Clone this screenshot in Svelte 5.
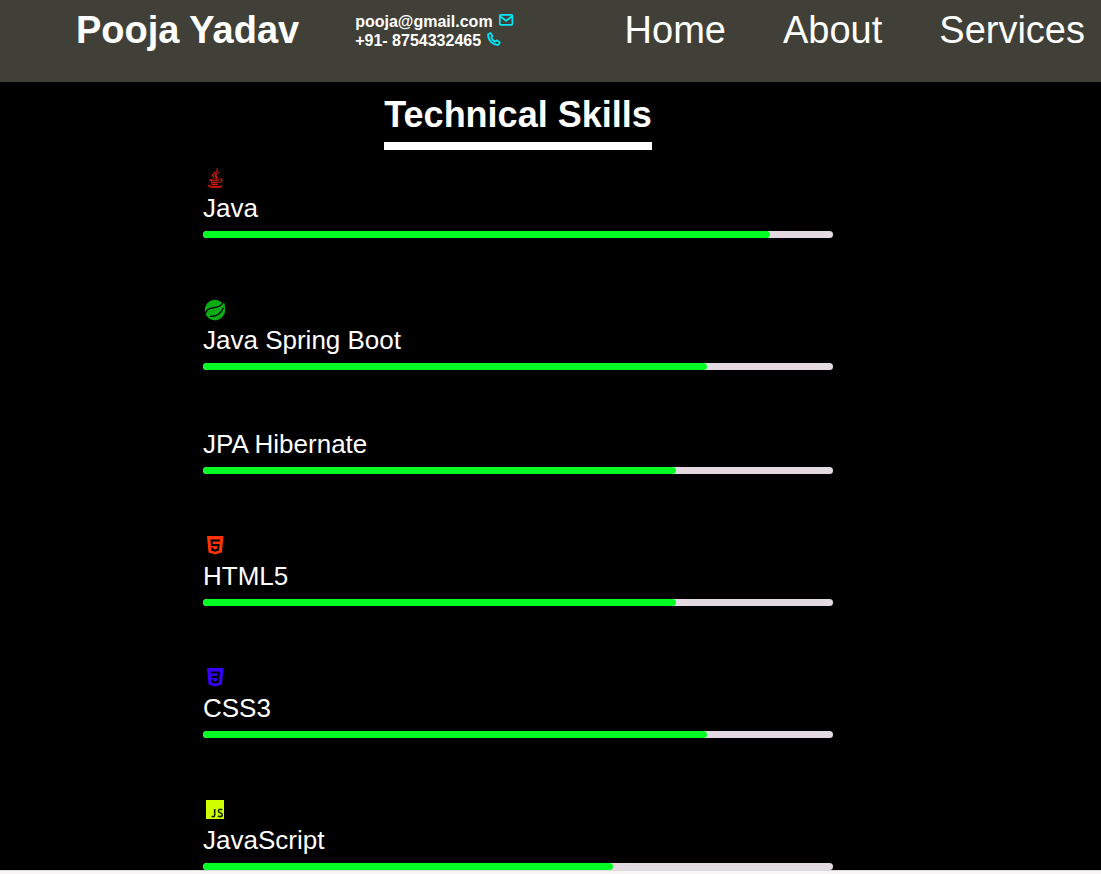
<script>
  const links = ['Home', 'About', 'Services'];
  const skills = [
    { name: 'Java', icon: 'java', level: 90 },
    { name: 'Java Spring Boot', icon: 'spring', level: 80 },
    { name: 'JPA Hibernate', icon: null, level: 75 },
    { name: 'HTML5', icon: 'html', level: 75 },
    { name: 'CSS3', icon: 'css', level: 80 },
    { name: 'JavaScript', icon: 'js', level: 65 }
  ];
</script>

<header>
  <h1>Pooja Yadav</h1>
  <address>
    <div class="contact">
      <span>pooja@gmail.com</span>
      <svg viewBox="0 0 16 16" aria-hidden="true">
        <rect x="1.8" y="2.8" width="12.6" height="10" rx="1" />
        <path d="M2 4.2l6.1 4.6 6.1-4.6" />
      </svg>
    </div>
    <div class="contact">
      <span>+91- 8754332465</span>
      <svg viewBox="0 0 16 16" aria-hidden="true">
        <path d="M2.100 3.200L4.500 1.900 6.500 5 5.200 6.600c.8 1.800 2.200 3.200 4 4l1.700-1.300 3 2.100-1.400 2.400c-5.700.5-10.800-4.900-10.400-10.600z" />
      </svg>
    </div>
  </address>
  <nav>
    {#each links as link}
      <a href="#{link.toLowerCase()}">{link}</a>
    {/each}
  </nav>
</header>

<main>
  <h2>Technical Skills</h2>
  <ul>
    {#each skills as skill}
      <li>
        {#if skill.icon === 'java'}
          <svg class="icon java" viewBox="-64 0 512 512" aria-hidden="true">
            <path d="M277.74 312.9c9.8-6.7 23.4-12.5 23.4-12.5s-38.7 7-77.2 10.2c-47.1 3.9-97.7 4.7-123.1 1.3-60.1-8 33-30.1 33-30.1s-36.1-2.4-80.6 19c-52.5 25.4 130 37 224.5 12.1zm-85.4-32.1c-19-42.7-83.1-80.2 0-145.8C296 53.2 242.84 0 242.84 0c21.5 84.5-75.6 110.1-110.7 162.6-23.9 35.9 11.7 74.4 60.2 118.2zm114.6-176.2c.1 0-175.2 43.8-91.5 140.2 24.7 28.4-6.5 54-6.5 54s62.7-32.4 33.9-72.9c-26.9-37.8-47.5-56.6 64.1-121.3zm-6.1 270.5a12.19 12.19 0 0 1-2 2.6c128.3-33.7 81.1-118.9 19.8-97.3a17.33 17.33 0 0 0-8.2 6.3 70.45 70.45 0 0 1 11-3c31-6.5 75.5 41.5-20.6 91.4zM348 437.4s14.5 11.9-15.9 21.2c-57.9 17.5-240.8 22.8-291.6.7-18.3-7.9 16-19 26.8-21.3 11.2-2.4 17.7-2 17.7-2-20.3-14.3-131.3 28.1-56.4 40.2C232.84 509.4 401 461.3 348 437.4zM124.44 396c-78.7 22 47.9 67.4 148.1 24.5a185.89 185.89 0 0 1-28.2-13.8c-44.7 8.5-65.4 9.1-106 4.5-33.5-3.8-13.9-15.2-13.9-15.2zm179.8 97.2c-78.7 14.8-175.8 13.1-233.3 3.6 0-.1 11.8 9.7 72.4 13.6 92.2 5.9 233.8-3.3 237.1-46.9 0 0-6.4 16.5-76.2 29.7zM260.64 353c-59.2 11.4-93.5 11.1-136.8 6.6-33.5-3.5-11.6-19.7-11.6-19.7-86.8 28.8 48.2 61.4 169.5 25.9a60.37 60.37 0 0 1-21.1-12.8z" />
          </svg>
        {:else if skill.icon === 'spring'}
          <svg class="icon spring" viewBox="0 0 24 24" aria-hidden="true">
            <path d="M20.600 3l.8 2.200q.7 2.500.8 6.300a10.200 10.200 0 1 1-2.900-6.600q.8-.8 1.300-1.900z" />
            <path class="gap" d="M2 16.500C3.500 9.500 9 10.200 13.500 9.200 17.500 8.300 19.500 6 21 3.500M7 18.400C13 18.800 18 15.500 20.500 9.800" />
          </svg>
        {:else if skill.icon === 'html'}
          <svg class="icon html" viewBox="0 1 24 24" aria-hidden="true">
            <path fill-rule="evenodd" d="M4 3h16.400l-1.500 16.400L12.200 21.400 5.500 19.400zM7.400 6.500l.6 6.500h6.200l-.2 2.800-1.900.6-1.900-.6-.1-1.300H8l.3 3 3.800 1.200 3.900-1.200.6-6.500H9.900l-.2-2.500h7.100l.2-2z" />
          </svg>
        {:else if skill.icon === 'css'}
          <svg class="icon css" viewBox="0 1 24 24" aria-hidden="true">
            <path fill-rule="evenodd" d="M4 3h16.400l-1.500 16.400L12.200 21.400 5.500 19.400zM7.400 6.500l.2 2h7.100l-.2 2.300H7.800l.2 2.100h6.300l-.2 2.900-1.900.6-1.900-.6-.1-1.300H8l.3 3 3.800 1.200 3.900-1.200 1-11z" />
          </svg>
        {:else if skill.icon === 'js'}
          <svg class="icon js" viewBox="0 0 24 24" aria-hidden="true">
            <rect x="3" y="2" width="18" height="19" />
            <path d="M11.700 11v6q0 1.700-1.600 1.700-.9 0-1.500-.5M19.300 12q-1-.8-2.200-.7-1.700.1-1.700 1.700 0 1.100 1.800 1.800 2.100.7 2.100 2 0 1.800-2.200 1.800-1.200 0-2.200-.7" />
          </svg>
        {/if}
        <h3>{skill.name}</h3>
        <div class="track" role="progressbar" aria-label={skill.name} aria-valuenow={skill.level} aria-valuemin="0" aria-valuemax="100">
          <div class="fill" style="width: {skill.level}%"></div>
        </div>
      </li>
    {/each}
  </ul>
</main>
<footer></footer>

<style>
  :global(body) {
    margin: 0;
    background: #f8f6f6;
    color: #fff;
    font-family: 'Liberation Sans', Arial, sans-serif;
  }
  header {
    display: flex;
    align-items: flex-start;
    min-height: 74px;
    padding: 8px 16px 0 76px;
    background: #404038;
  }
  h1 {
    margin: 0;
    font-size: 38px;
    line-height: 44px;
    white-space: nowrap;
  }
  address {
    margin: 4px 0 0 56px;
    font-size: 16px;
    font-style: normal;
    font-weight: bold;
    line-height: 19px;
    white-space: nowrap;
  }
  .contact {
    display: flex;
    gap: 5px;
  }
  .contact svg {
    width: 16px;
    height: 16px;
    fill: none;
    stroke: #00e8f8;
    stroke-width: 1.7;
    stroke-linejoin: round;
  }
  nav {
    display: flex;
    gap: 57px;
    margin-left: auto;
    font-size: 38px;
    line-height: 44px;
  }
  a {
    color: #fff;
    text-decoration: none;
  }
  main {
    padding: 12px 268px 0 203px;
    background: #000;
  }
  h2 {
    width: fit-content;
    margin: 0 auto 16px;
    border-bottom: 8px solid #fff;
    padding-bottom: 6px;
    font-size: 36px;
    line-height: 42px;
    white-space: nowrap;
  }
  ul {
    display: grid;
    gap: 60px;
    margin: 0;
    padding: 0;
    list-style: none;
  }
  .icon {
    display: block;
    width: 24px;
    height: 24px;
    margin-bottom: 4px;
  }
  .java {
    box-sizing: border-box;
    padding: 2px;
    fill: #f0200c;
    stroke: #f0200c;
    stroke-width: 12;
  }
  .spring {
    fill: #0cac14;
  }
  .spring .gap {
    fill: none;
    stroke: #000;
    stroke-width: 1.3;
  }
  .html {
    fill: #ff3200;
  }
  .css {
    fill: #3800ff;
  }
  .js rect {
    fill: #d0ff00;
  }
  .js path {
    fill: none;
    stroke: #102800;
    stroke-width: 1.6;
  }
  h3 {
    margin: 0 0 9px;
    font-size: 26px;
    font-weight: normal;
    line-height: 28px;
  }
  .track {
    height: 7px;
    border-radius: 4px;
    background: #e3dae1;
    overflow: hidden;
  }
  .fill {
    height: 100%;
    border-radius: 4px;
    background: #00ff22;
  }
  footer {
    height: 3px;
    border-top: 1px solid #dedada;
    background: #f8f6f6;
  }
</style>
